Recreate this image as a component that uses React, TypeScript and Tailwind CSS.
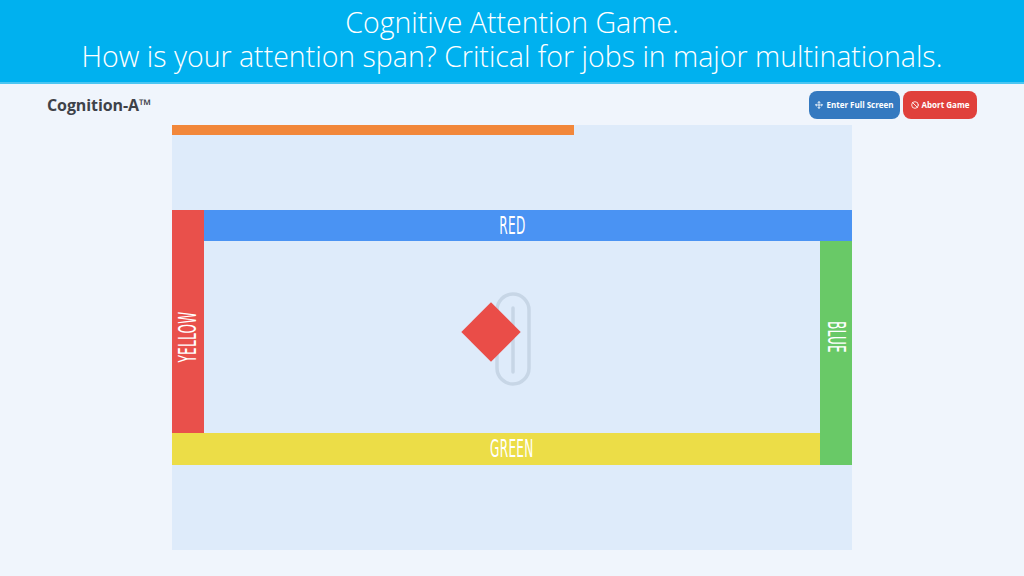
import { Move, Ban } from "lucide-react";

function Label({ text, className = "" }: { text: string; className?: string }) {
    return (
        <span
            className={`inline-block text-[24px] leading-none text-white tracking-[0.5px] scale-x-[0.56] ${className}`}
            style={{ fontFamily: '"DejaVu Sans Condensed", "DejaVu Sans", sans-serif' }}
        >
            {text}
        </span>
    );
}

export default function App() {
    return (
        <div className="w-[1024px] h-[576px] bg-[#f0f5fc] overflow-hidden" style={{ fontFamily: '"Open Sans", sans-serif' }}>
            {/* Banner */}
            <div className="h-[84px] bg-[#00b1ef] border-b-2 border-[#4cc6f2] flex flex-col items-center gap-[6px] pt-[8px] text-white text-[28.5px] leading-[28px] font-light">
                <div>Cognitive Attention Game.</div>
                <div>How is your attention span? Critical for jobs in major multinationals.</div>
            </div>

            {/* Top bar */}
            <div className="flex items-center justify-between pl-[47px] pr-[47px] h-[41px] pt-[1px]">
                <div className="text-[16px] font-bold text-[#3e4249] tracking-[-0.1px]">Cognition-A™</div>
                <div className="flex gap-[3px]">
                    <button className="w-[91px] h-[28px] rounded-[8px] bg-[#3479c0] text-white text-[8px] font-bold flex items-center justify-center gap-[3px]">
                        <Move className="w-[8px] h-[8px]" strokeWidth={2.5} /> Enter Full Screen
                    </button>
                    <button className="w-[74px] h-[28px] rounded-[8px] bg-[#e0403b] text-white text-[8px] font-bold flex items-center justify-center gap-[3px]">
                        <Ban className="w-[8px] h-[8px]" strokeWidth={2.5} /> Abort Game
                    </button>
                </div>
            </div>

            {/* Game area */}
            <div className="mx-auto w-[680px] h-[425px] bg-[#deebfa] flex flex-col">
                <div className="w-[402px] h-[10px] bg-[#f2873a]" />
                <div className="h-[75px]" />
                <div className="grid grid-cols-[32px_616px_32px] grid-rows-[31px_192px_32px] h-[255px]">
                    <div className="col-start-1 row-start-1 row-span-2 bg-[#e9504b] flex items-center justify-center pt-[31px]">
                        <Label text="YELLOW" className="-rotate-90" />
                    </div>
                    <div className="col-start-2 col-span-2 row-start-1 bg-[#4a93f3] flex items-center justify-center pr-[32px]">
                        <Label text="RED" />
                    </div>
                    <div className="col-start-3 row-start-2 row-span-2 bg-[#69c967] flex items-center justify-center pb-[32px]">
                        <Label text="BLUE" className="rotate-90" />
                    </div>
                    <div className="col-start-1 col-span-2 row-start-3 bg-[#ecdd47] flex items-center justify-center pl-[32px]">
                        <Label text="GREEN" />
                    </div>
                    <div className="col-start-2 row-start-2 relative">
                        <svg className="absolute left-[291px] top-[51px]" width="36" height="94" viewBox="0 0 36 94">
                            <rect x="2" y="2" width="32" height="90" rx="16" fill="none" stroke="#c7d6e6" strokeWidth="3.5" />
                            <line x1="18" y1="16" x2="18" y2="80" stroke="#c7d6e6" strokeWidth="3.5" strokeLinecap="round" />
                        </svg>
                        <div className="absolute left-[266px] top-[70px] w-[42px] h-[42px] bg-[#ea4d48] rotate-45" />
                    </div>
                </div>
            </div>
        </div>
    );
}
